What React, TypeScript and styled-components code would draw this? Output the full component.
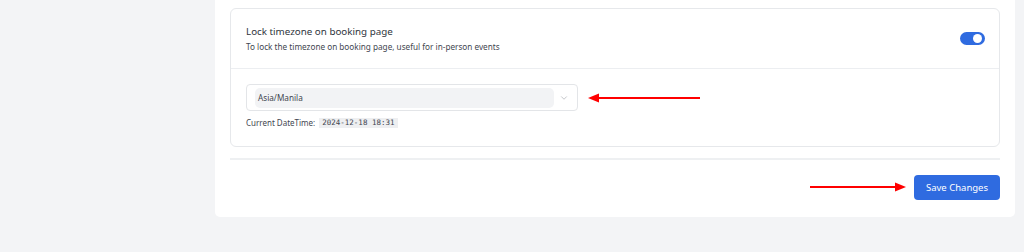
import styled, { createGlobalStyle } from 'styled-components';
import { ChevronDown } from 'lucide-react';

const GlobalStyle = createGlobalStyle`
  html, body {
    margin: 0;
    padding: 0;
    background: #f3f4f6;
    font-family: "Noto Sans", "Open Sans", sans-serif;
  }
`;

const Page = styled.div`
  width: 1024px;
  height: 252px;
  display: flex;
  align-items: flex-start;
  position: relative;
  overflow: hidden;
`;

const Panel = styled.div`
  margin-left: 215px;
  width: 800px;
  height: 217px;
  background: #fff;
  border-radius: 0 0 5px 5px;
  box-sizing: border-box;
  padding: 8px 15px 0 15px;
  display: flex;
  flex-direction: column;
`;

const Card = styled.div`
  border: 1px solid #e6e8eb;
  border-radius: 6px;
  height: 139px;
  box-sizing: border-box;
  display: flex;
  flex-direction: column;
`;

const CardHeader = styled.div`
  height: 60px;
  box-sizing: border-box;
  border-bottom: 1px solid #eceef1;
  display: flex;
  align-items: center;
  justify-content: space-between;
  padding: 0 14px 0 15px;
`;

const HeaderText = styled.div`
  display: flex;
  flex-direction: column;
  gap: 3px;
`;

const Title = styled.div`
  font-size: 9.8px;
  color: #2f353d;
  line-height: 13px;
`;

const Subtitle = styled.div`
  font-size: 8.2px;
  color: #3f4650;
  line-height: 11px;
`;

const Toggle = styled.div<{ on?: boolean }>`
  width: 25px;
  height: 13px;
  border-radius: 7px;
  background: ${p => (p.on ? '#2f6be0' : '#d1d5db')};
  position: relative;
  &::after {
    content: '';
    position: absolute;
    top: 2px;
    left: ${p => (p.on ? '13px' : '2px')};
    width: 9px;
    height: 9px;
    border-radius: 50%;
    background: #fff;
  }
`;

const CardBody = styled.div`
  padding: 15px 15px 0 15px;
  display: flex;
  flex-direction: column;
  gap: 6px;
`;

const Select = styled.div`
  width: 332px;
  height: 27px;
  box-sizing: border-box;
  border: 1px solid #e3e5e8;
  border-radius: 4px;
  display: flex;
  align-items: center;
  padding: 2px 8px 2px 8px;
  gap: 5px;
  color: #a0a4aa;
`;

const SelectValue = styled.div`
  flex: 1;
  height: 20px;
  background: #f2f3f5;
  border-radius: 5px;
  display: flex;
  align-items: center;
  padding-left: 3px;
  font-size: 8.2px;
  color: #3f4650;
`;

const DateRow = styled.div`
  display: flex;
  align-items: center;
  gap: 4px;
  font-size: 8px;
  color: #3f4650;
`;

const Code = styled.span`
  font-family: "DejaVu Sans Mono", monospace;
  font-size: 7.5px;
  line-height: 10px;
  background: #eeeff1;
  padding: 0 3px;
  color: #3f4650;
`;

const Divider = styled.div`
  margin-top: 11px;
  height: 2px;
  background: #eef0f2;
`;

const Footer = styled.div`
  display: flex;
  justify-content: flex-end;
  padding-top: 15px;
`;

const Button = styled.button`
  width: 86px;
  height: 25px;
  border: none;
  border-radius: 4px;
  background: #2f6be0;
  color: #fff;
  font-family: "Noto Sans", "Open Sans", sans-serif;
  font-size: 9.5px;
  padding: 0;
`;

const Arrow = styled.svg<{ x: number; y: number }>`
  position: absolute;
  left: ${p => p.x}px;
  top: ${p => p.y}px;
`;

export default function App() {
  return (
    <>
      <GlobalStyle />
      <Page>
        <Panel>
          <Card>
            <CardHeader>
              <HeaderText>
                <Title>Lock timezone on booking page</Title>
                <Subtitle>To lock the timezone on booking page, useful for in-person events</Subtitle>
              </HeaderText>
              <Toggle on />
            </CardHeader>
            <CardBody>
              <Select>
                <SelectValue>Asia/Manila</SelectValue>
                <ChevronDown size={10} strokeWidth={1.5} />
              </Select>
              <DateRow>
                Current DateTime: <Code>2024-12-18 18:31</Code>
              </DateRow>
            </CardBody>
          </Card>
          <Divider />
          <Footer>
            <Button>Save Changes</Button>
          </Footer>
        </Panel>
        <Arrow x={588} y={93} width={114} height={10} viewBox="0 0 114 10">
          <line x1="9" y1="5" x2="112" y2="5" stroke="#f00" strokeWidth="2" />
          <polygon points="0,5 11,0.5 11,9.5" fill="#f00" />
        </Arrow>
        <Arrow x={808} y={182} width={98} height={10} viewBox="0 0 98 10">
          <line x1="2" y1="5" x2="88" y2="5" stroke="#f00" strokeWidth="2" />
          <polygon points="98,5 87,0.5 87,9.5" fill="#f00" />
        </Arrow>
      </Page>
    </>
  );
}
